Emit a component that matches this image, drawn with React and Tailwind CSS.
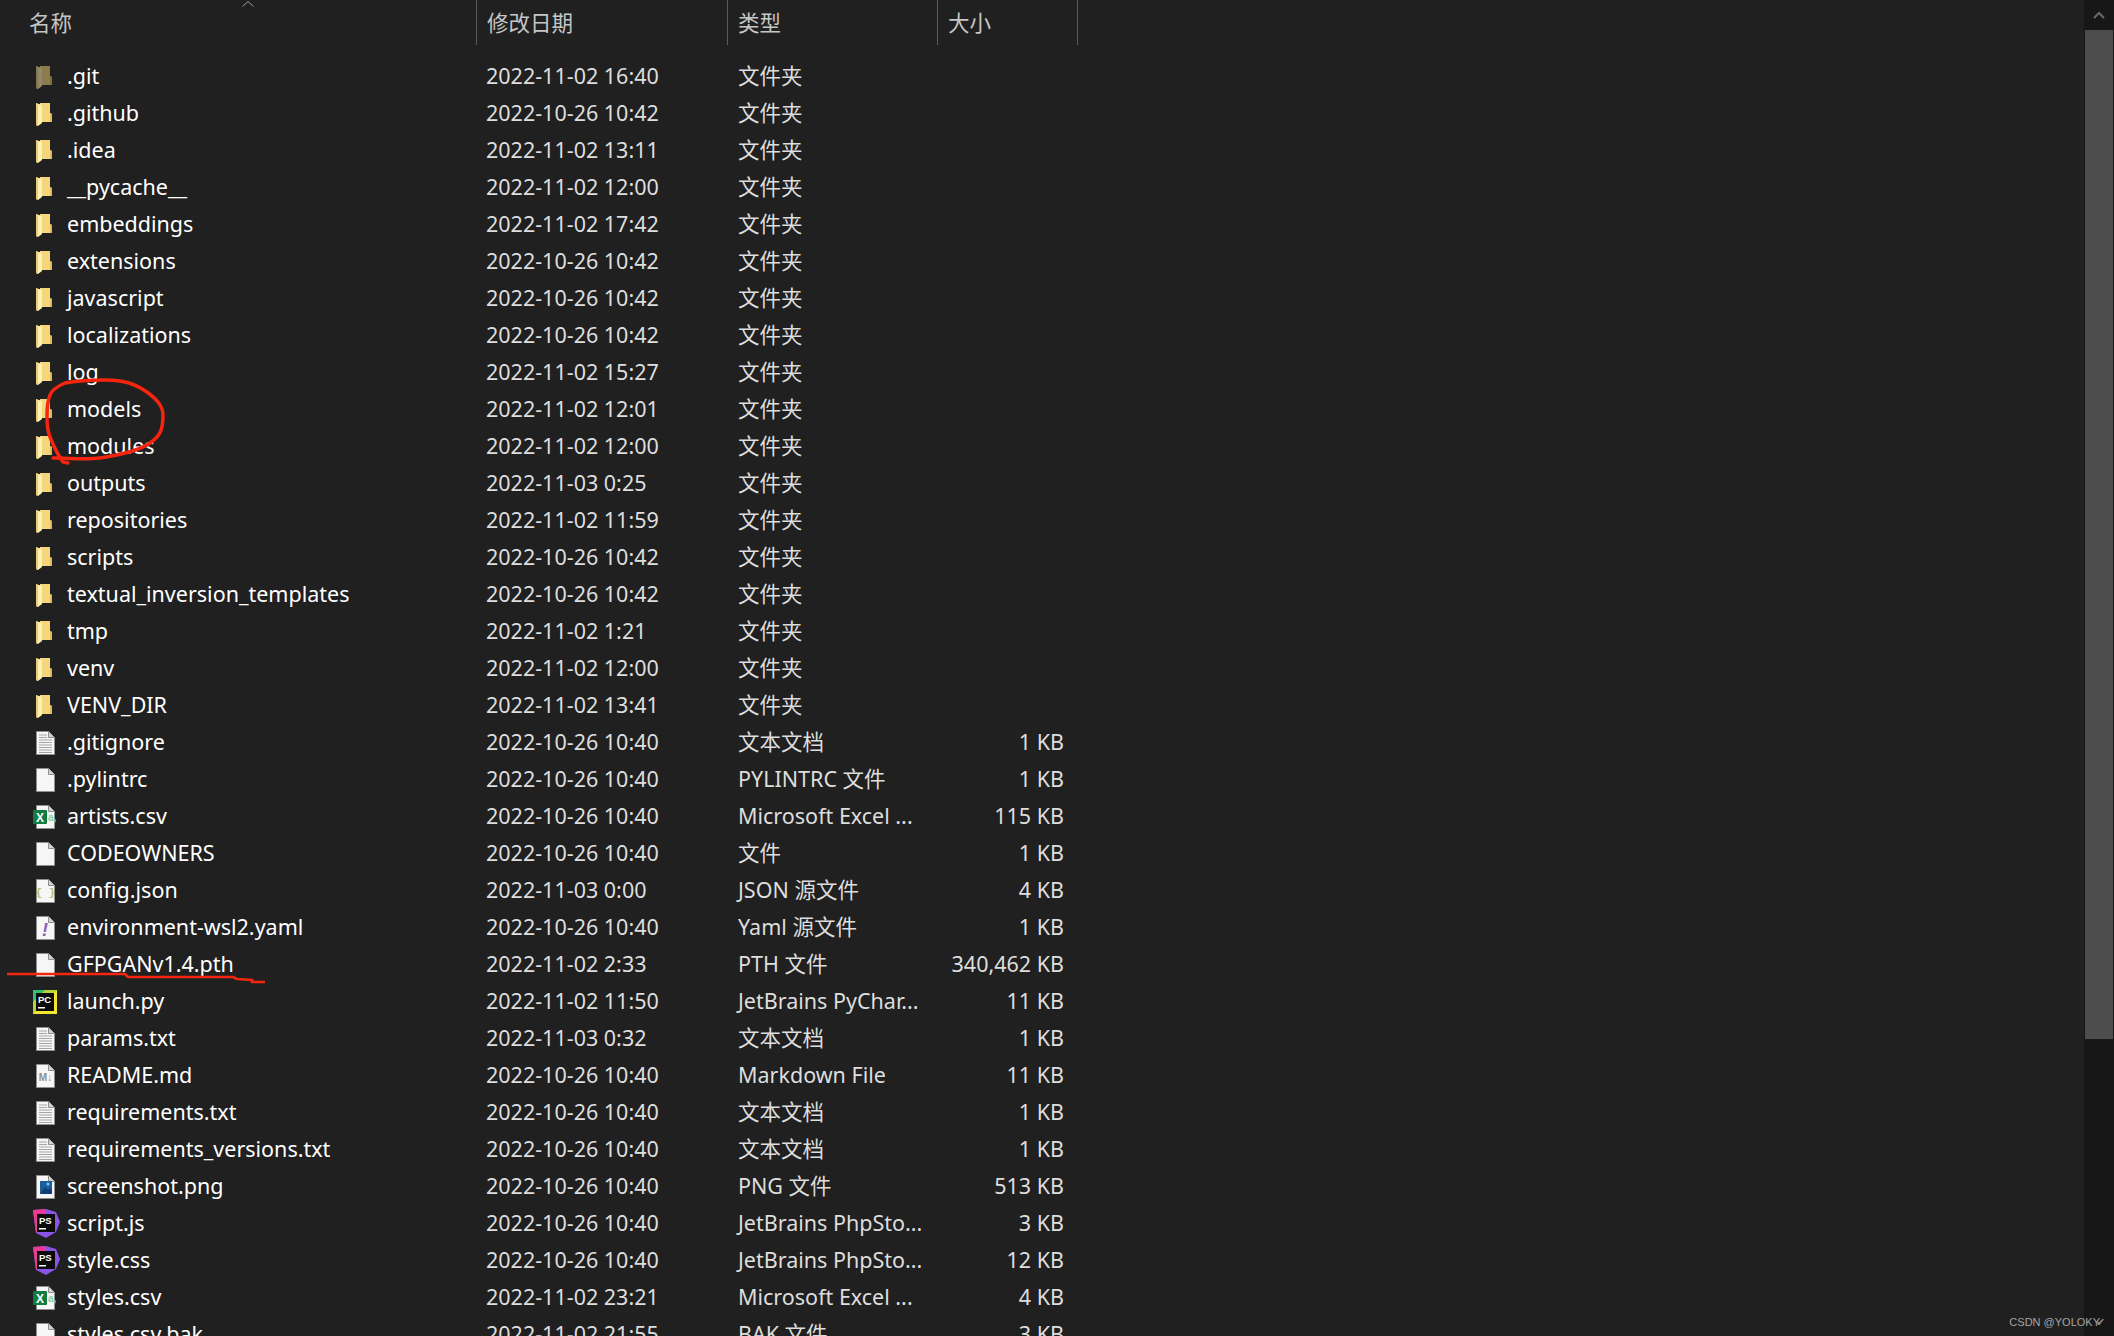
const FONT = '[font-family:"Noto_Sans","Noto_Sans_CJK_SC",sans-serif]';

const rows = [
  [".git", "2022-11-02 16:40", "文件夹", "", "hidden"],
  [".github", "2022-10-26 10:42", "文件夹", "", "folder"],
  [".idea", "2022-11-02 13:11", "文件夹", "", "folder"],
  ["__pycache__", "2022-11-02 12:00", "文件夹", "", "folder"],
  ["embeddings", "2022-11-02 17:42", "文件夹", "", "folder"],
  ["extensions", "2022-10-26 10:42", "文件夹", "", "folder"],
  ["javascript", "2022-10-26 10:42", "文件夹", "", "folder"],
  ["localizations", "2022-10-26 10:42", "文件夹", "", "folder"],
  ["log", "2022-11-02 15:27", "文件夹", "", "folder"],
  ["models", "2022-11-02 12:01", "文件夹", "", "folder"],
  ["modules", "2022-11-02 12:00", "文件夹", "", "folder"],
  ["outputs", "2022-11-03 0:25", "文件夹", "", "folder"],
  ["repositories", "2022-11-02 11:59", "文件夹", "", "folder"],
  ["scripts", "2022-10-26 10:42", "文件夹", "", "folder"],
  ["textual_inversion_templates", "2022-10-26 10:42", "文件夹", "", "folder"],
  ["tmp", "2022-11-02 1:21", "文件夹", "", "folder"],
  ["venv", "2022-11-02 12:00", "文件夹", "", "folder"],
  ["VENV_DIR", "2022-11-02 13:41", "文件夹", "", "folder"],
  [".gitignore", "2022-10-26 10:40", "文本文档", "1 KB", "text"],
  [".pylintrc", "2022-10-26 10:40", "PYLINTRC 文件", "1 KB", "file"],
  ["artists.csv", "2022-10-26 10:40", "Microsoft Excel ...", "115 KB", "excel"],
  ["CODEOWNERS", "2022-10-26 10:40", "文件", "1 KB", "file"],
  ["config.json", "2022-11-03 0:00", "JSON 源文件", "4 KB", "json"],
  ["environment-wsl2.yaml", "2022-10-26 10:40", "Yaml 源文件", "1 KB", "yaml"],
  ["GFPGANv1.4.pth", "2022-11-02 2:33", "PTH 文件", "340,462 KB", "file"],
  ["launch.py", "2022-11-02 11:50", "JetBrains PyChar...", "11 KB", "pycharm"],
  ["params.txt", "2022-11-03 0:32", "文本文档", "1 KB", "text"],
  ["README.md", "2022-10-26 10:40", "Markdown File", "11 KB", "md"],
  ["requirements.txt", "2022-10-26 10:40", "文本文档", "1 KB", "text"],
  ["requirements_versions.txt", "2022-10-26 10:40", "文本文档", "1 KB", "text"],
  ["screenshot.png", "2022-10-26 10:40", "PNG 文件", "513 KB", "png"],
  ["script.js", "2022-10-26 10:40", "JetBrains PhpSto...", "3 KB", "phpstorm"],
  ["style.css", "2022-10-26 10:40", "JetBrains PhpSto...", "12 KB", "phpstorm"],
  ["styles.csv", "2022-11-02 23:21", "Microsoft Excel ...", "4 KB", "excel"],
  ["styles.csv.bak", "2022-11-02 21:55", "BAK 文件", "3 KB", "file"],
];

function Page({ children }) {
  return (
    <>
      <path d="M6.5 4.5H18.5L24.5 10.5V27.5H6.5Z" fill="#f6f6f6" stroke="#8f8f8f" />
      <path d="M18.5 4.5V10.5H24.5" fill="#d2d2d2" stroke="#8f8f8f" />
      {children}
    </>
  );
}

function Icon({ type }) {
  let inner = null;
  if (type === "folder" || type === "hidden") {
    inner = (
      <g opacity={type === "hidden" ? 0.5 : 1}>
        <path d="M10 5H20V15L22 16V24H10Z" fill="#f6d67a" />
        <path d="M20 5V15L22 16V24H20Z" fill="#e0b95c" />
        <path d="M6 5L12 7V25L8 28L6 27Z" fill="#fff0b4" />
        <path d="M6 5V27L8 28V7Z" fill="#eecb72" />
      </g>
    );
  } else if (type === "file") {
    inner = <Page />;
  } else if (type === "text") {
    inner = (
      <Page>
        <path d="M9 8H17M9 10.5H17M9 13H22M9 15.5H22M9 18H22M9 20.5H22M9 23H22M9 25.5H22" stroke="#a5a5a5" strokeWidth="1" />
      </Page>
    );
  } else if (type === "excel") {
    inner = (
      <Page>
        <rect x="3" y="9" width="14" height="14" rx="1" fill="#107c41" />
        <text x="10" y="20.5" textAnchor="middle" fontSize="12" fontWeight="700" fill="#fff" fontFamily="Liberation Sans">X</text>
        <text x="18" y="20" fontSize="10" fontWeight="700" fill="#7fd3a8" fontFamily="Liberation Sans">a,</text>
      </Page>
    );
  } else if (type === "json") {
    inner = (
      <Page>
        <text x="15.5" y="21" textAnchor="middle" fontSize="11" fontWeight="700" fill="#b9bd6a" fontFamily="Liberation Mono">{"{ }"}</text>
      </Page>
    );
  } else if (type === "yaml") {
    inner = (
      <Page>
        <text x="15" y="24" textAnchor="middle" fontSize="18" fontWeight="700" fontStyle="italic" fill="#8a5fb5" fontFamily="Liberation Sans">!</text>
      </Page>
    );
  } else if (type === "md") {
    inner = (
      <Page>
        <text x="15.5" y="21" textAnchor="middle" fontSize="10" fontWeight="700" fill="#8e8e8e" fontFamily="Liberation Sans">M↓</text>
      </Page>
    );
  } else if (type === "png") {
    inner = (
      <Page>
        <rect x="10" y="10" width="12" height="13" fill="#1c5d9c" />
        <path d="M10 23L15 16L18 19L20 17L22 20V23Z" fill="#0f3f75" />
        <circle cx="18" cy="13" r="1.5" fill="#7fc4f0" />
      </Page>
    );
  } else if (type === "pycharm") {
    inner = (
      <>
        <rect x="3" y="4" width="24" height="24" fill="#b7d433" />
        <path d="M27 4V28H3Z" fill="#f2e62e" />
        <path d="M3 4H15L3 16Z" fill="#2fc26b" />
        <rect x="6" y="7" width="18" height="18" fill="#0b0b0b" />
        <text x="8" y="16.5" fontSize="9.5" fontWeight="700" fill="#fff" fontFamily="Liberation Sans">PC</text>
        <rect x="8" y="21" width="7" height="1.5" fill="#fff" />
      </>
    );
  } else if (type === "phpstorm") {
    inner = (
      <>
        <path d="M3 2L16 1L26 4L30 14L26 24L16 30L6 25Z" fill="#8a55e6" />
        <path d="M3 2L16 1L12 18L6 25Z" fill="#ea3a96" />
        <rect x="7" y="6" width="18" height="18" fill="#0b0b0b" />
        <text x="9" y="15.5" fontSize="9.5" fontWeight="700" fill="#fff" fontFamily="Liberation Sans">PS</text>
        <rect x="9" y="20" width="7" height="1.5" fill="#fff" />
      </>
    );
  }
  return (
    <svg viewBox="0 0 32 32" className="w-8 h-8 shrink-0">
      {inner}
    </svg>
  );
}

function HeaderCell({ label, width }) {
  return (
    <div className={`h-[45px] flex items-center pl-[10px] pt-[2px] text-[#c6c6c6] border-r border-[#5a5a5a] ${width}`}>
      {label}
    </div>
  );
}

export default function App() {
  return (
    <div className={`relative w-full h-[1336px] overflow-hidden bg-[#202020] flex text-[21.5px] ${FONT}`}>
      <div className="flex-1 min-w-0">
        {/* header */}
        <div className="flex">
          <div className="relative w-[477px] h-[45px] flex items-center pl-[29px] pt-[2px] text-[#c6c6c6] border-r border-[#5a5a5a]">
            名称
            <svg viewBox="0 0 12 6" className="absolute left-[242px] top-[1px] w-3 h-[6px]">
              <path d="M0.5 5.5L6 0.5L11.5 5.5" fill="none" stroke="#9a9a9a" />
            </svg>
          </div>
          <HeaderCell label="修改日期" width="w-[251px]" />
          <HeaderCell label="类型" width="w-[210px]" />
          <HeaderCell label="大小" width="w-[140px]" />
        </div>

        {/* file rows */}
        <div className="pt-[13px]">
          {rows.map(([name, date, kind, size, icon]) => (
            <div key={name} className="flex items-center h-[37px] whitespace-nowrap">
              <div className="w-[476px] pl-[30px] flex items-center gap-[5px] text-white">
                <Icon type={icon} />
                {name}
              </div>
              <div className="w-[252px] pl-[10px] text-[#dedede]">{date}</div>
              <div className="w-[209px] pl-[10px] text-[#dedede]">{kind}</div>
              <div className="w-[127px] text-right text-[#dedede]">{size}</div>
            </div>
          ))}
        </div>
      </div>

      {/* scrollbar */}
      <div className="w-[30px] shrink-0 bg-[#171717] flex flex-col">
        <div className="h-[30px] flex items-center justify-center">
          <svg viewBox="0 0 12 8" className="w-3 h-2">
            <path d="M1 7L6 2L11 7" fill="none" stroke="#6a6a6a" strokeWidth="2" />
          </svg>
        </div>
        <div className="h-[1009px] ml-px mr-px bg-[#4d4d4d]" />
      </div>

      {/* red pen marks drawn over the list */}
      <svg className="absolute left-0 top-0 w-[300px] h-[1000px] pointer-events-none" viewBox="0 0 300 1000">
        <path
          d="M53 458C70 458 85 460 100 458C120 455 140 450 150 443C160 436 163 430 163 415C163 405 155 398 147 392C135 384 125 380 105 380C90 380 75 381 65 383C58 386 52 390 50 395C47 402 47 410 47 417C47 425 48 432 50 437C54 447 58 455 63 462L68 463"
          fill="none"
          stroke="#f5250f"
          strokeWidth="3.5"
          strokeLinecap="round"
        />
        <path
          d="M7 974L125 974L128 977L155 977L233 977L237 979L252 980L252 982L265 982"
          fill="none"
          stroke="#f5250f"
          strokeWidth="2.6"
        />
      </svg>

      {/* watermark */}
      <div className="absolute right-[9px] bottom-[6px] flex items-center text-[11px] text-[#a5a5a5] [font-family:'Liberation_Sans',sans-serif]">
        CSDN @YOLOKY
        <span className="text-[#8a8a8a] -ml-[4px]">✔</span>
      </div>
    </div>
  );
}
